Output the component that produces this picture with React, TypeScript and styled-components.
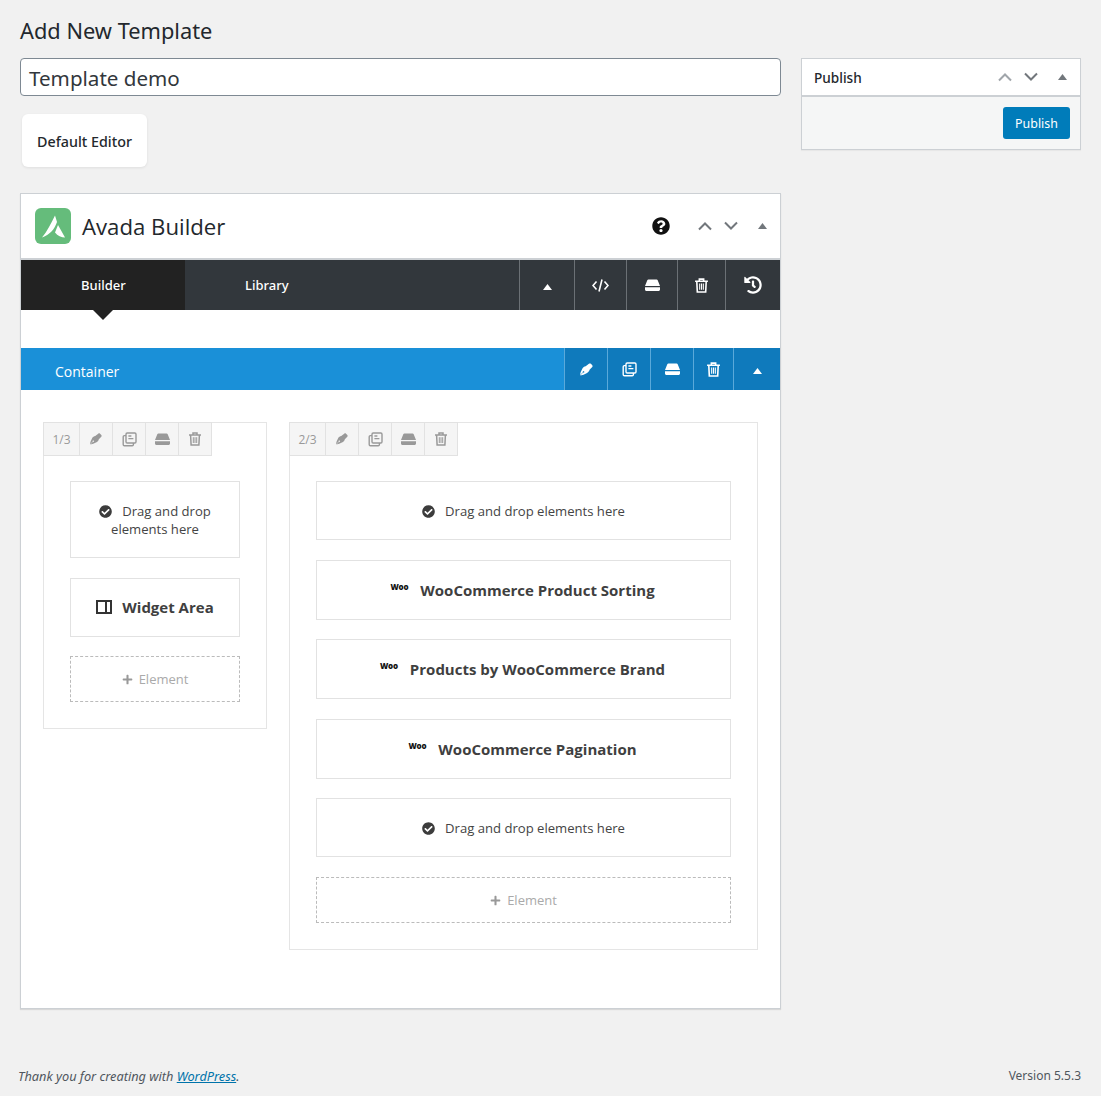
import React from "react";
import styled, { createGlobalStyle } from "styled-components";
import { FaCheckCircle, FaQuestionCircle, FaHistory, FaPlus } from "react-icons/fa";

const Global = createGlobalStyle`
  html, body { margin: 0; padding: 0; background: #f1f1f1; }
  body { font-family: "Open Sans", "Noto Sans", sans-serif; color: #23282d; }
  * { box-sizing: border-box; }
`;

const Shell = styled.div`
  min-height: 1096px;
  display: flex;
  flex-direction: column;
  padding: 0 20px;
`;
const Columns = styled.div`
  display: grid;
  grid-template-columns: 761px 280px;
  column-gap: 20px;
  padding-top: 16px;
`;
const Main = styled.main`
  display: flex;
  flex-direction: column;
  align-items: flex-start;
`;
const Title = styled.h1`
  margin: 0;
  height: 30px;
  font: 400 21.8px/30px "Noto Sans", sans-serif;
  color: #23282d;
`;
const TitleInput = styled.div`
  margin-top: 12px;
  width: 761px;
  height: 38px;
  border: 1px solid #7e8993;
  border-radius: 4px;
  background: #fff;
  padding-left: 8px;
  font: 400 20.6px/38px "Noto Sans", sans-serif;
  color: #32373c;
`;
const EditorButton = styled.div`
  margin: 18px 0 0 2px;
  width: 125px;
  height: 53px;
  padding-top: 3px;
  border-radius: 6px;
  background: #fff;
  box-shadow: 0 1px 3px rgba(0, 0, 0, 0.08);
  display: flex;
  align-items: center;
  justify-content: center;
  font: 500 14.3px/1 "Noto Sans", sans-serif;
  color: #23282d;
`;
const Builder = styled.section`
  margin-top: 26px;
  width: 761px;
  height: 816px;
  background: #fff;
  border: 1px solid #ccd0d4;
  box-shadow: 0 1px 1px rgba(0, 0, 0, 0.1);
`;
const BuilderHead = styled.header`
  height: 66px;
  display: flex;
  align-items: center;
  padding: 0 13px 0 14px;
  border-bottom: 2px solid #ccd0d4;
`;
const LogoTile = styled.svg`
  width: 36px;
  height: 36px;
  flex: none;
`;
const BuilderName = styled.span`
  margin-left: 11px;
  padding-top: 2px;
  font: 400 22.2px/1 "Open Sans", sans-serif;
  color: #23282d;
  flex: 1;
`;
const HelpIcon = styled(FaQuestionCircle)`
  width: 18px;
  height: 18px;
  color: #111;
  margin-right: 27px;
`;
const Handles = styled.div`
  display: flex;
  align-items: center;
  gap: ${(p: { $gap: number }) => p.$gap}px;
`;
const Chevron = styled.svg`
  width: 16px;
  height: 10px;
  fill: none;
  stroke: ${(p: { $tone: string }) => p.$tone};
  stroke-width: 2;
`;
const Caret = styled.svg`
  width: 9px;
  height: 6px;
  fill: ${(p: { $tone: string }) => p.$tone};
  flex: none;
`;
const BarCaret = styled.span`
  display: flex;
  margin-top: 3px;
`;
const HeadCaret = styled.span`
  margin-left: 19px;
  display: flex;
`;
const TabBar = styled.nav`
  height: 50px;
  background: #32373c;
  display: flex;
`;
const Tab = styled.div<{ $active?: boolean }>`
  position: relative;
  padding: 0 60px;
  width: ${(p) => (p.$active ? "164px" : "auto")};
  display: flex;
  align-items: center;
  background: ${(p) => (p.$active ? "#222" : "transparent")};
  color: #fff;
  font: 500 13px/1 "Noto Sans", sans-serif;
  ${(p) =>
    p.$active &&
    `&::after {
      content: "";
      position: absolute;
      left: 72px;
      top: 50px;
      border: 10px solid transparent;
      border-top-color: #222;
      border-bottom: 0;
    }`}
`;
const TabActions = styled.div`
  margin-left: auto;
  display: flex;
`;
const BarButton = styled.div<{ $w: number; $tone: string }>`
  width: ${(p) => p.$w}px;
  display: flex;
  align-items: center;
  justify-content: center;
  border-left: 1px solid ${(p) => p.$tone};
  color: #fff;
`;
const ContainerBar = styled.div`
  margin-top: 38px;
  height: 42px;
  background: #1a90d8;
  display: flex;
  align-items: stretch;
`;
const ContainerName = styled.div`
  padding: 5px 0 0 34px;
  flex: 1;
  display: flex;
  align-items: center;
  color: #fff;
  font: 400 14px/1 "Open Sans", sans-serif;
`;
const ContainerActions = styled.div`
  display: flex;
  background: #0f7abc;
`;
const Row = styled.div`
  display: flex;
  align-items: flex-start;
  padding: 32px 22px 0;
  gap: 22px;
`;
const Column = styled.div<{ $w: number; $h: number }>`
  width: ${(p) => p.$w}px;
  height: ${(p) => p.$h}px;
  border: 1px solid #e5e5e5;
`;
const ColTools = styled.div`
  display: flex;
  width: max-content;
  height: 34px;
  margin: -1px 0 0 -1px;
  background: #f5f5f5;
  border: 1px solid #e2e2e2;
`;
const ColTool = styled.div<{ $first?: boolean }>`
  width: ${(p) => (p.$first ? 35 : 33)}px;
  padding-top: ${(p) => (p.$first ? 2 : 0)}px;
  display: flex;
  align-items: center;
  justify-content: center;
  color: #999;
  font: 400 12px/1 "Open Sans", sans-serif;
  & + & {
    border-left: 1px solid #e2e2e2;
  }
`;
const Stack = styled.div`
  display: flex;
  flex-direction: column;
  padding: 25px 26px 0;
`;
const Card = styled.div<{ $h: number; $gap: number }>`
  height: ${(p) => p.$h}px;
  margin-bottom: ${(p) => p.$gap}px;
  border: 1px solid #e2e2e2;
  display: flex;
  align-items: center;
  justify-content: center;
  text-align: center;
  color: #333;
`;
const DropText = styled.div`
  font: 400 13.1px/18px "Open Sans", sans-serif;
  color: #444;
  padding: 0 26px;
`;
const Check = styled(FaCheckCircle)`
  width: 13px;
  height: 13px;
  color: #3c3c3c;
  margin-right: 10px;
  vertical-align: -2px;
`;
const Strong = styled.span`
  font: 700 15px/1 "Open Sans", sans-serif;
  color: #3f3f3f;
`;
const WooMark = styled.span`
  font: 800 8px/1 "Open Sans", sans-serif;
  letter-spacing: -0.2px;
  color: #111;
  margin: -7px 12px 0 -2px;
`;
const WidgetIcon = styled.svg`
  width: 16px;
  height: 14px;
  margin: -2px 10px 0 0;
  fill: none;
  stroke: #333;
  stroke-width: 2;
`;
const AddElement = styled.div`
  height: 46px;
  border: 1px dashed #bbb;
  display: flex;
  align-items: center;
  justify-content: center;
  gap: 6px;
  color: #aaa;
  font: 400 13px/1 "Open Sans", sans-serif;
`;
const PlusIcon = styled(FaPlus)`
  width: 11px;
  height: 11px;
  color: #999;
`;
const Side = styled.aside`
  padding-top: 42px;
`;
const PublishBox = styled.div`
  height: 92px;
  border: 1px solid #ccd0d4;
  box-shadow: 0 1px 1px rgba(0, 0, 0, 0.04);
  background: #f5f6f6;
`;
const PublishHead = styled.div`
  height: 38px;
  background: #fff;
  border-bottom: 2px solid #ccd0d4;
  display: flex;
  align-items: center;
  padding: 0 13px 0 12px;
`;
const PublishTitle = styled.span`
  flex: 1;
  padding-top: 2px;
  font: 500 13.6px/1 "Noto Sans", sans-serif;
  color: #23282d;
`;
const PublishFoot = styled.div`
  display: flex;
  justify-content: flex-end;
  padding: 10px 10px 0;
`;
const PublishButton = styled.div`
  width: 67px;
  height: 32px;
  background: #007cba;
  border-radius: 3px;
  color: #fff;
  font: 400 12.4px/33px "Noto Sans", sans-serif;
  text-align: center;
`;
const Footer = styled.footer`
  margin-top: auto;
  height: 26px;
  margin-left: -2px;
  display: flex;
  justify-content: space-between;
  font: 400 12px/1 "Noto Sans", sans-serif;
  color: #50575e;
`;
const Thanks = styled.em`
  font-style: italic;
  font-size: 12.75px;
`;
const Link = styled.a`
  color: #0073aa;
  text-decoration: underline;
`;

const Pen = ({ s = 13 }: { s?: number }) => (
  <svg width={s} height={s} viewBox="0 0 14 14" fill="currentColor">
    <path d="M9.600.8c.6-.5 1.500-.5 2.100 0l1.500 1.500c.5.6.5 1.500 0 2.100L10.300 7.400c-.3 1.400-1.300 2.700-2.700 3.400L3.800 12.600.5 13.500l-.1-.2 3-3 .6.2.9-.9-1.100-1.100-.9.9.2.600-3 3-.2-.1.900-3.300 1.800-3.800C3.300 4.700 4.600 3.700 6.100 3.400z" />
  </svg>
);
const Trash = ({ s = 15 }: { s?: number }) => (
  <svg width={s} height={s} viewBox="0 0 14 14" fill="none" stroke="currentColor" strokeWidth="1.500">
    <path d="M1 3h12M5 3V1h4v2M2.600 3l.5 10h7.800l.5-10" />
    <path d="M5.300 5.200v5.800M7 5.200v5.800M8.700 5.200v5.800" strokeWidth="1" />
  </svg>
);
const Copy = ({ s = 15 }: { s?: number }) => (
  <svg width={s} height={s} viewBox="0 0 15 15" fill="none" stroke="currentColor" strokeWidth="1.400">
    <rect x="4" y="1" width="10" height="10" rx="1.200" />
    <path d="M4 3.600H2.400A1.200 1.200 0 0 0 1.200 4.800v7.800a1.200 1.200 0 0 0 1.200 1.200h7.800a1.200 1.200 0 0 0 1.200-1.200V11" />
    <path d="M6.400 4h3M6.400 6.600h5" />
  </svg>
);
const Save = ({ s = 15 }: { s?: number }) => (
  <svg width={s} height={s * 0.8} viewBox="0 0 15 12" fill="currentColor">
    <path d="M3.400.5h8.200c.5 0 .9.300 1.100.7L15 7H0l2.300-5.800c.2-.4.600-.7 1.100-.7zM0 8.300h15v2.200c0 .8-.7 1.500-1.500 1.500h-12C.7 12 0 11.300 0 10.500z" />
  </svg>
);
const Up = ({ tone }: { tone: string }) => (
  <Caret $tone={tone} viewBox="0 0 9 6"><path d="M4.500 0L9 6H0z" /></Caret>
);
const ChevUp = ({ tone }: { tone: string }) => (
  <Chevron $tone={tone} viewBox="0 0 16 10"><path d="M2 8.500L8 2.500l6 6" /></Chevron>
);
const ChevDown = ({ tone }: { tone: string }) => (
  <Chevron $tone={tone} viewBox="0 0 16 10"><path d="M2 1.500l6 6 6-6" /></Chevron>
);
const CodeGlyph = () => (
  <svg width="17" height="13" viewBox="0 0 17 13" fill="none" stroke="currentColor" strokeWidth="1.600">
    <path d="M4.500 2.500L1 6.500l3.500 4M12.500 2.500l3.500 4-3.500 4M10 .5L7 12.500" />
  </svg>
);

const Tools = ({ label }: { label: string }) => (
  <ColTools>
    <ColTool $first>{label}</ColTool>
    <ColTool><Pen s={12} /></ColTool>
    <ColTool><Copy s={15} /></ColTool>
    <ColTool><Save s={15} /></ColTool>
    <ColTool><Trash s={14} /></ColTool>
  </ColTools>
);

const Drop = ({ h, gap }: { h: number; gap: number }) => (
  <Card $h={h} $gap={gap}>
    <DropText><Check />Drag and drop elements here</DropText>
  </Card>
);
const Woo = ({ name, h, gap }: { name: string; h: number; gap: number }) => (
  <Card $h={h} $gap={gap}>
    <WooMark>Woo</WooMark>
    <Strong>{name}</Strong>
  </Card>
);
const Add = () => (
  <AddElement><PlusIcon />Element</AddElement>
);

export default function App() {
  return (
    <>
      <Global />
      <Shell>
        <Columns>
          <Main>
            <Title>Add New Template</Title>
            <TitleInput>Template demo</TitleInput>
            <EditorButton>Default Editor</EditorButton>
            <Builder>
              <BuilderHead>
                <LogoTile viewBox="0 0 36 36">
                  <rect width="36" height="36" rx="6" fill="#65bc7b" />
                  <path d="M20 7.500l2 6.500c-2.500 7-6.500 12.500-15 15.500 5-6 9-14 13-22z" fill="#fff" />
                  <path d="M23 17l7 12.500c-3.500 0-7.500-1.500-10-5z" fill="#fff" />
                </LogoTile>
                <BuilderName>Avada Builder</BuilderName>
                <HelpIcon />
                <Handles $gap={10}>
                  <ChevUp tone="#72777c" />
                  <ChevDown tone="#72777c" />
                </Handles>
                <HeadCaret><Up tone="#72777c" /></HeadCaret>
              </BuilderHead>
              <TabBar>
                <Tab $active>Builder</Tab>
                <Tab>Library</Tab>
                <TabActions>
                  <BarButton $w={55} $tone="#6b7075"><BarCaret><Up tone="#fff" /></BarCaret></BarButton>
                  <BarButton $w={52} $tone="#6b7075"><CodeGlyph /></BarButton>
                  <BarButton $w={51} $tone="#6b7075"><Save /></BarButton>
                  <BarButton $w={48} $tone="#6b7075"><Trash /></BarButton>
                  <BarButton $w={55} $tone="#6b7075"><FaHistory size={18} /></BarButton>
                </TabActions>
              </TabBar>
              <ContainerBar>
                <ContainerName>Container</ContainerName>
                <ContainerActions>
                  <BarButton $w={43} $tone="#5aa9da"><Pen /></BarButton>
                  <BarButton $w={43} $tone="#5aa9da"><Copy /></BarButton>
                  <BarButton $w={43} $tone="#5aa9da"><Save /></BarButton>
                  <BarButton $w={40} $tone="#5aa9da"><Trash /></BarButton>
                  <BarButton $w={47} $tone="#5aa9da"><BarCaret><Up tone="#fff" /></BarCaret></BarButton>
                </ContainerActions>
              </ContainerBar>
              <Row>
                <Column $w={224} $h={307}>
                  <Tools label="1/3" />
                  <Stack>
                    <Drop h={77} gap={20} />
                    <Card $h={59} $gap={19}>
                      <WidgetIcon viewBox="0 0 16 14">
                        <rect x="1" y="1" width="14" height="12" />
                        <path d="M10 1v12" />
                      </WidgetIcon>
                      <Strong>Widget Area</Strong>
                    </Card>
                    <Add />
                  </Stack>
                </Column>
                <Column $w={469} $h={528}>
                  <Tools label="2/3" />
                  <Stack>
                    <Drop h={59} gap={20} />
                    <Woo name="WooCommerce Product Sorting" h={60} gap={19} />
                    <Woo name="Products by WooCommerce Brand" h={60} gap={20} />
                    <Woo name="WooCommerce Pagination" h={60} gap={19} />
                    <Drop h={59} gap={20} />
                    <Add />
                  </Stack>
                </Column>
              </Row>
            </Builder>
          </Main>
          <Side>
            <PublishBox>
              <PublishHead>
                <PublishTitle>Publish</PublishTitle>
                <Handles $gap={10}>
                  <ChevUp tone="#a0a5aa" />
                  <ChevDown tone="#72777c" />
                </Handles>
                <HeadCaret><Up tone="#72777c" /></HeadCaret>
              </PublishHead>
              <PublishFoot>
                <PublishButton>Publish</PublishButton>
              </PublishFoot>
            </PublishBox>
          </Side>
        </Columns>
        <Footer>
          <Thanks>Thank you for creating with <Link href="#">WordPress</Link>.</Thanks>
          <span>Version 5.5.3</span>
        </Footer>
      </Shell>
    </>
  );
}
